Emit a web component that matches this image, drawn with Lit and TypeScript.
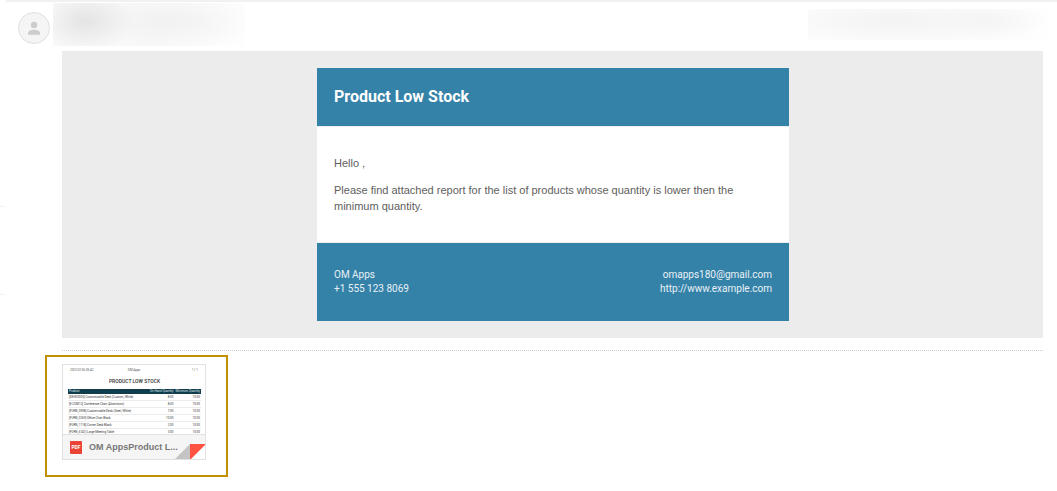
import { LitElement, html, css } from "lit";
import { customElement } from "lit/decorators.js";

const products = [
  ["[DESK0005] Customizable Desk (Custom, White)", "8.00", "10.00"],
  ["[E-COM12] Conference Chair (Aluminium)", "8.00", "10.00"],
  ["[FURN_0098] Customizable Desk (Steel, White)", "7.00", "10.00"],
  ["[FURN_0269] Office Chair Black", "10.00", "10.00"],
  ["[FURN_1118] Corner Desk Black", "2.00", "10.00"],
  ["[FURN_6741] Large Meeting Table", "3.00", "10.00"],
];

@customElement("attachment-card")
class AttachmentCard extends LitElement {
  static styles = css`
    :host { display: block; width: 144px; }
    .card {
      position: relative;
      display: block;
      box-sizing: border-box;
      height: 96px;
      border: 1px solid #e2e2e2;
      background: #fff;
      color: #333;
      text-decoration: none;
      overflow: hidden;
    }
    .sheet { height: 69px; padding: 3px 4px 0 5px; box-sizing: border-box; overflow: hidden; font: 3px/4px Roboto, sans-serif; }
    .meta { display: grid; grid-template-columns: 1fr 1fr 1fr; padding: 0 3px 0 2px; color: #555; }
    .meta span:nth-child(2) { text-align: center; }
    .meta span:nth-child(3) { text-align: right; }
    .title { margin: 6px 0 5px; text-align: center; font: 500 5px/6px Roboto, sans-serif; }
    table { width: 100%; border-collapse: collapse; table-layout: fixed; }
    th { background: #103c4c; color: #dde6e9; font-weight: 400; height: 5px; line-height: 5px; }
    td { height: 6px; line-height: 6px; border-bottom: 1px solid #ececec; font-weight: 400; color: #333; }
    th, td { padding: 0 1px; white-space: nowrap; text-align: right; }
    th:first-child, td:first-child { width: 78px; text-align: left; }
    .bar {
      display: flex;
      align-items: center;
      gap: 7px;
      height: 25px;
      box-sizing: border-box;
      border-top: 1px solid #e2e2e2;
      padding: 0 20px 0 7px;
      background: #f5f5f5;
    }
    .pdf { flex: none; width: 12px; height: 13px; border-radius: 1px; background: #ea4335; color: #fff; font: 700 5px/13px Roboto, sans-serif; text-align: center; }
    .name { white-space: nowrap; color: #777; font: 700 9px/14px "Liberation Sans", Arial, sans-serif; }
    .fold { position: absolute; right: -1px; bottom: -1px; width: 32px; height: 16px; }
  `;
  render() {
    return html`
      <a class="card" href="#attachment">
        <div class="sheet">
          <div class="meta"><span>2023-02-06 05:42</span><span>OM Apps</span><span>1 / 1</span></div>
          <div class="title">PRODUCT LOW STOCK</div>
          <table>
            <thead><tr><th>Product</th><th>On Hand Quantity</th><th>Minimum Quantity</th></tr></thead>
            <tbody>${products.map((row) => html`<tr>${row.map((cell) => html`<td>${cell}</td>`)}</tr>`)}</tbody>
          </table>
        </div>
        <div class="bar"><span class="pdf">PDF</span><span class="name">OM AppsProduct L...</span></div>
        <svg class="fold" viewBox="0 0 32 16" aria-hidden="true">
          <path d="M16 0H32V16H16z" fill="#fff" />
          <path d="M0 16L16 0V16z" fill="#c4c4c4" />
          <path d="M16 0H32L16 16z" fill="#ff5242" />
        </svg>
      </a>
    `;
  }
}

@customElement("app-root")
class AppRoot extends LitElement {
  static styles = css`
    :host { display: flex; min-height: 100vh; background: #fff; font-family: Roboto, sans-serif; }
    .rail { flex: none; width: 5px; }
    .rail div { height: 87px; border-bottom: 1px solid #f1f1f1; }
    .rail div:first-child { height: 206px; }
    .message { flex: 1; min-width: 0; margin-left: 1px; border-top: 2px solid #f1f1f1; }
    .head { display: flex; align-items: flex-start; height: 49px; padding: 0 9px 0 12px; box-sizing: border-box; }
    .avatar { flex: none; width: 32px; height: 32px; margin-top: 10px; }
    .sender {
      width: 192px;
      height: 43px;
      margin: 1px auto 0 3px;
      background:
        radial-gradient(ellipse 48px 32px at 32px 18px, #e4e4e4, #e4e4e400),
        radial-gradient(ellipse 90px 30px at 115px 18px, #f1f1f1, #f1f1f100),
        linear-gradient(90deg, #fafafa, #f9f9f9 50%, #fefefe);
    }
    .date {
      width: 240px;
      height: 31px;
      margin-top: 7px;
      background:
        radial-gradient(ellipse 120px 22px at 85px 12px, #f3f3f3, #f3f3f300),
        radial-gradient(ellipse 60px 20px at 180px 12px, #f5f5f5, #f5f5f500),
        linear-gradient(90deg, #fcfcfc, #fbfbfb 60%, #fefefe);
    }
    .mail { margin: 0 14px 0 56px; padding: 17px 16px 17px 17px; background: #ececec; }
    .card { max-width: 472px; margin: 0 auto; background: #fff; }
    .title { margin: 0; padding: 17px; background: #3582a9; color: #fff; font: 700 16px/24px Roboto, sans-serif; }
    .body { padding: 28px 17px; border: solid #eee; border-width: 1px 0; color: #5e5e5e; font: 11px/16px "Liberation Sans", Arial, sans-serif; }
    .body p { margin: 0; }
    .body p + p { margin-top: 11px; }
    .foot { display: flex; justify-content: space-between; padding: 25px 17px; background: #3582a9; color: #e9f1f5; font-size: 10px; line-height: 14px; }
    .foot div { display: flex; flex-direction: column; }
    .foot div:last-child { text-align: right; }
    .foot a { color: inherit; text-decoration: none; }
    .rule { margin: 12px 14px 0 56px; border-top: 1px dotted #ccc; }
    .attachments { display: inline-block; margin: 4px 0 0 39px; padding: 7px 20px 15px 15px; border: 2px solid #bf9000; }
  `;
  render() {
    return html`
      <div class="rail"><div></div><div></div></div>
      <main class="message">
        <header class="head">
          <svg class="avatar" viewBox="0 0 32 32" role="img" aria-label="Sender">
            <circle cx="16" cy="16" r="15.5" fill="#f5f5f5" stroke="#e0e0e0" />
            <circle cx="16" cy="13" r="3.2" fill="#ccc" />
            <path d="M10 22.8V21c0-2.2 3.8-3.2 6-3.2s6 1 6 3.2v1.8z" fill="#ccc" />
          </svg>
          <div class="sender"></div>
          <div class="date"></div>
        </header>
        <section class="mail">
          <article class="card">
            <h1 class="title">Product Low Stock</h1>
            <div class="body">
              <p>Hello ,</p>
              <p>Please find attached report for the list of products whose quantity is lower then the minimum quantity.</p>
            </div>
            <footer class="foot">
              <div><span>OM Apps</span><span>+1 555 123 8069</span></div>
              <div><a href="mailto:omapps180@gmail.com">omapps180@gmail.com</a><a href="http://www.example.com">http://www.example.com</a></div>
            </footer>
          </article>
        </section>
        <div class="rule"></div>
        <section class="attachments"><attachment-card></attachment-card></section>
      </main>
    `;
  }
}
